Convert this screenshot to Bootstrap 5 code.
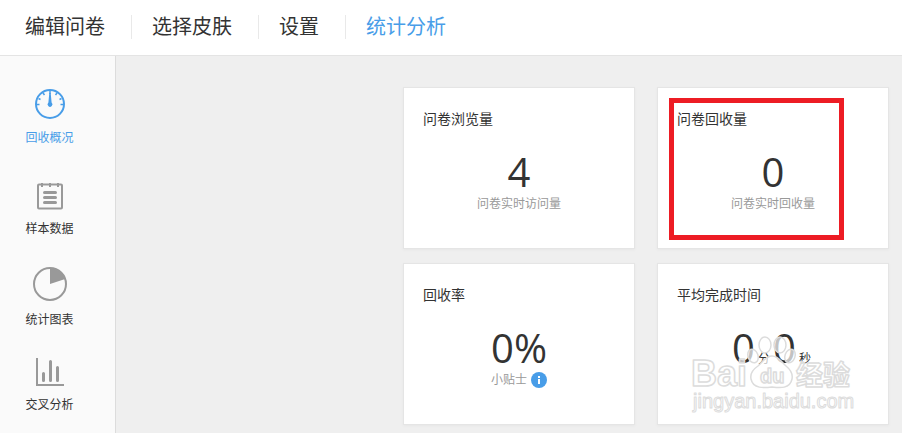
<!DOCTYPE html>
<html lang="zh-CN">
<head>
<meta charset="utf-8">
<meta name="viewport" content="width=device-width, initial-scale=1">
<title>统计分析</title>
<link href="https://cdn.jsdelivr.net/npm/bootstrap@5.3.0/dist/css/bootstrap.min.css" rel="stylesheet">
<style>
  body { font-family: "Open Sans", "Noto Sans CJK SC", sans-serif; color: #333; background: #efefef; }
  a { text-decoration: none; }
  .topbar { height: 56px; padding-left: 5px; padding-bottom: 2px; border-bottom: 1px solid #e4e4e4; }
  .topbar a { font-size: 20px; line-height: 24px; padding: 0 26px 0 20px; color: #333; }
  .topbar a + a { border-left: 1px solid #e9e9e9; }
  .topbar a.active, .side a.active { color: #489de8; }
  .side { width: 116px; padding: 33px 16px 0 0; background: #fafafa; border-right: 1px solid #dcdcdc; }
  .side a { gap: 10px; margin-bottom: 29px; font-size: 12px; line-height: 18px; color: #333; }
  .side a.active { margin-bottom: 35px; }
  .side a:last-child { margin-bottom: 0; }
  .board { grid-template-columns: repeat(2, minmax(0, 232px)); gap: 14px 22px; padding: 31px 13px 8px; }
  .stat { min-height: 162px; padding: 20px 19px; border: 1px solid #e5e5e5; box-shadow: 0 1px 3px rgba(0, 0, 0, .04); }
  .stat h2 { font-size: 14px; line-height: 22px; font-weight: 400; margin: 0 0 22px; }
  .figure-num { font-size: 40px; line-height: 40px; }
  .figure-num small { font-size: 12px; margin: 0 3px; }
  .note { font-size: 12px; line-height: 18px; margin-top: 3px; color: #999; }
  .note button { line-height: 0; }
  .frame { left: 11px; top: 10px; width: 175px; height: 142px; border: 5px solid #ed1c24; pointer-events: none; }
  .stamp { left: 30px; top: 68px; pointer-events: none; }
</style>
<script src="https://cdn.jsdelivr.net/npm/bootstrap@5.3.0/dist/js/bootstrap.bundle.min.js"></script>
</head>
<body class="d-flex flex-column min-vh-100">
<header>
  <nav class="topbar d-flex align-items-center bg-white" aria-label="主导航">
    <a href="#">编辑问卷</a>
    <a href="#">选择皮肤</a>
    <a href="#">设置</a>
    <a href="#" class="active" aria-current="page">统计分析</a>
  </nav>
</header>
<div class="d-flex flex-grow-1">
  <nav class="side flex-shrink-0" aria-label="统计">
    <a href="#" class="active d-flex flex-column align-items-center">
      <svg width="30" height="30" viewBox="0 0 30 30" fill="none" stroke="#489de8" aria-hidden="true">
        <circle cx="15" cy="15" r="14" stroke-width="2"/>
        <path d="M2 15.500h2.500M25.500 15.500H28M3.500 9.500l2 1M26.500 9.500l-2 1M8 4l1.500 2M22 4l-1.500 2M15 2v3" stroke-width="1.500"/>
        <path d="M14.300 4h1.400l.9 9.600a2.400 2.400 0 1 1-3.200 0z" fill="#489de8" stroke="none"/>
      </svg>
      <span>回收概况</span>
    </a>
    <a href="#" class="d-flex flex-column align-items-center">
      <svg width="26" height="28" viewBox="0 0 26 28" fill="none" stroke="#999" aria-hidden="true">
        <rect x="1" y="2.500" width="24" height="24" rx="1" stroke-width="2"/>
        <path d="M5 1v4M13 1v4M21 1v4" stroke-width="2"/>
        <path d="M7.500 10.500h11M7.500 15.500h11M7.500 20.500h11" stroke-width="3" stroke-linecap="round"/>
      </svg>
      <span>样本数据</span>
    </a>
    <a href="#" class="d-flex flex-column align-items-center">
      <svg width="34" height="34" viewBox="0 0 34 34" aria-hidden="true">
        <circle cx="17" cy="17" r="16" fill="none" stroke="#999" stroke-width="2"/>
        <path d="M17 17V1a16 16 0 0 1 15.200 11z" fill="#999"/>
      </svg>
      <span>统计图表</span>
    </a>
    <a href="#" class="d-flex flex-column align-items-center">
      <svg width="28" height="28" viewBox="0 0 28 28" fill="none" stroke="#999" aria-hidden="true">
        <path d="M1 0v27h27" stroke-width="2"/>
        <path d="M7.500 15.500v7M14.500 3.500v19M21.500 9.500v13" stroke-width="3" stroke-linecap="round"/>
      </svg>
      <span>交叉分析</span>
    </a>
  </nav>
  <main class="board flex-grow-1 d-grid justify-content-end align-content-start">
    <section class="stat bg-white">
      <h2>问卷浏览量</h2>
      <div class="figure-num text-center">4</div>
      <div class="note text-center">问卷实时访问量</div>
    </section>
    <section class="stat bg-white position-relative">
      <h2>问卷回收量</h2>
      <div class="figure-num text-center">0</div>
      <div class="note text-center">问卷实时回收量</div>
      <div class="frame position-absolute"></div>
    </section>
    <section class="stat bg-white">
      <h2>回收率</h2>
      <div class="figure-num text-center">0%</div>
      <div class="note d-flex justify-content-center align-items-center gap-1">小贴士
        <button type="button" class="border-0 bg-transparent p-0" aria-label="查看小贴士">
          <svg width="16" height="16" viewBox="0 0 16 16" aria-hidden="true">
            <circle cx="8" cy="8" r="8" fill="#489de8"/>
            <path d="M7 4h2v2H7zM7 7h2v5H7z" fill="#fff"/>
          </svg>
        </button>
      </div>
    </section>
    <section class="stat bg-white position-relative">
      <h2>平均完成时间</h2>
      <div class="figure-num text-center">0<small>分</small>0<small>秒</small></div>
      <svg class="stamp position-absolute" width="176" height="86" viewBox="0 0 176 86" fill="#fff" fill-opacity=".7" stroke="#dcdcdc" stroke-width="1.500" stroke-linejoin="round" font-family="'Liberation Sans', 'Noto Sans CJK SC', sans-serif" font-weight="700">
        <ellipse cx="77" cy="13" rx="6" ry="8"/>
        <ellipse cx="92" cy="13" rx="6" ry="8"/>
        <ellipse cx="65" cy="24" rx="5" ry="7" transform="rotate(-20 65 24)"/>
        <ellipse cx="102" cy="24" rx="5" ry="7" transform="rotate(20 102 24)"/>
        <path d="M84 24c7 0 9 6 14 10 5 4 7 8 6 13-2 10-12 9-20 8-8 1-19 2-21-8-1-5 1-9 7-13 5-4 7-10 14-10z"/>
        <text x="3" y="54" font-size="36">Bai</text>
        <text x="72" y="51" font-size="20">du</text>
        <text x="108" y="53" font-size="27">经验</text>
        <text x="5" y="76" font-size="20" stroke-width="1" font-weight="400">jingyan.baidu.com</text>
      </svg>
    </section>
  </main>
</div>
</body>
</html>
